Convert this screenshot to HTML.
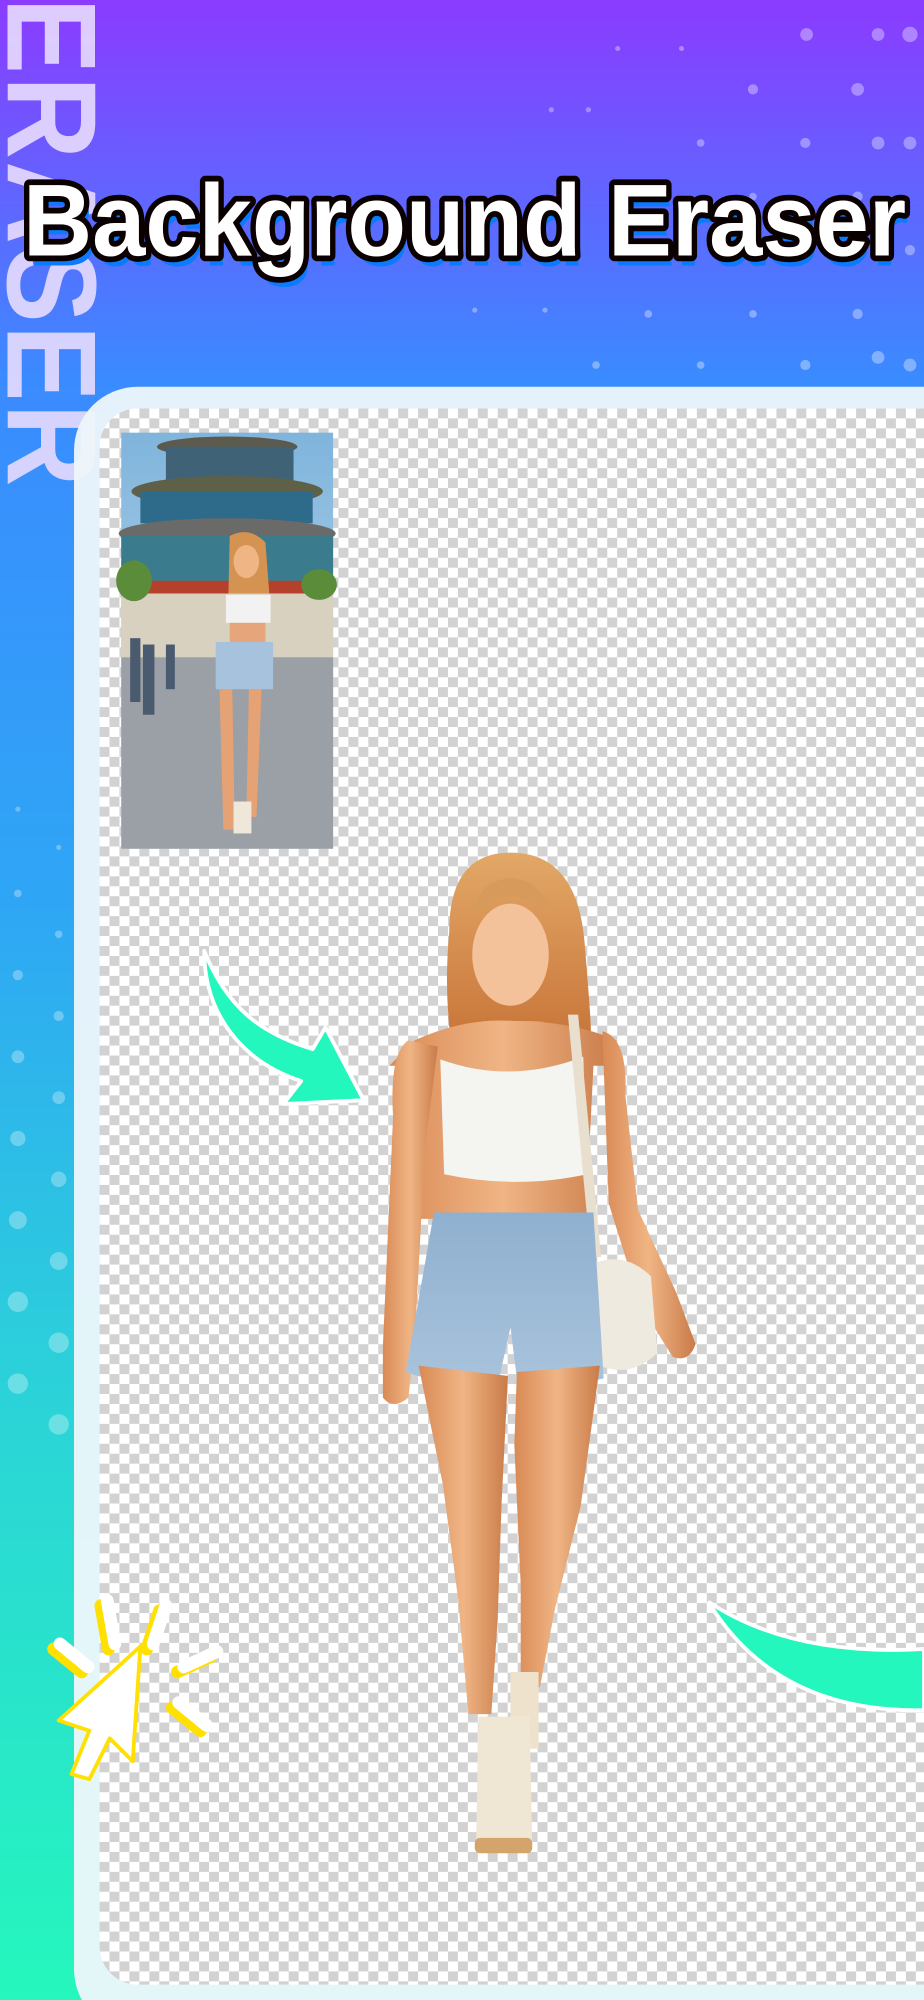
<!DOCTYPE html>
<html><head><meta charset="utf-8">
<style>
html,body{margin:0;padding:0;width:924px;height:2000px;overflow:hidden;}
svg{display:block}
</style></head>
<body>
<svg width="924" height="2000" viewBox="0 0 724 1567" preserveAspectRatio="none" xmlns="http://www.w3.org/2000/svg">
<defs>
<linearGradient id="bg" x1="0" y1="0" x2="0" y2="1">
<stop offset="0" stop-color="#8b3bff"/>
<stop offset="0.19" stop-color="#3a8bff"/>
<stop offset="0.45" stop-color="#2fa6f5"/>
<stop offset="0.7" stop-color="#2bd3d8"/>
<stop offset="1" stop-color="#25f7bd"/>
</linearGradient>
<pattern id="chk" width="15.6" height="15.6" patternUnits="userSpaceOnUse" x="78" y="320">
<rect width="15.6" height="15.6" fill="#fff"/>
<rect width="7.8" height="7.8" fill="#d2d2d2"/>
<rect x="7.8" y="7.8" width="7.8" height="7.8" fill="#d2d2d2"/>
</pattern>
<linearGradient id="sky" x1="0" y1="0" x2="0" y2="1">
<stop offset="0" stop-color="#7fb4dc"/><stop offset="1" stop-color="#cfe3ef"/>
</linearGradient>
<linearGradient id="skin" x1="0" y1="0" x2="1" y2="0">
<stop offset="0" stop-color="#d98a55"/><stop offset="0.5" stop-color="#f0b585"/><stop offset="1" stop-color="#c97b48"/>
</linearGradient>
<linearGradient id="hair" x1="0" y1="0" x2="0" y2="1">
<stop offset="0" stop-color="#e2a867"/><stop offset="1" stop-color="#c9763a"/>
</linearGradient>
<linearGradient id="jeans" x1="0" y1="0" x2="0" y2="1">
<stop offset="0" stop-color="#8fb0cf"/><stop offset="1" stop-color="#a9c3dc"/>
</linearGradient>
</defs>
<rect width="724" height="1567" fill="url(#bg)"/>
<g fill="#fff" opacity="0.35">
<circle cx="632" cy="27" r="5"/><circle cx="713" cy="27" r="6"/>
<circle cx="590" cy="70" r="4"/><circle cx="672" cy="70" r="5"/>
<circle cx="549" cy="112" r="3"/><circle cx="631" cy="112" r="4"/><circle cx="713" cy="112" r="5"/>
<circle cx="590" cy="154" r="3"/><circle cx="672" cy="154" r="4"/>
<circle cx="631" cy="196" r="3"/><circle cx="713" cy="196" r="4"/>
<circle cx="508" cy="246" r="3"/><circle cx="590" cy="246" r="3"/><circle cx="672" cy="246" r="4"/>
<circle cx="467" cy="286" r="3"/><circle cx="549" cy="286" r="3"/><circle cx="631" cy="286" r="4"/><circle cx="713" cy="286" r="5"/>
<circle cx="372" cy="243" r="2"/><circle cx="427" cy="243" r="2"/><circle cx="432" cy="86" r="2"/><circle cx="461" cy="86" r="2"/><circle cx="484" cy="38" r="2"/><circle cx="534" cy="38" r="2"/>
<circle cx="688" cy="27" r="5"/><circle cx="688" cy="112" r="5"/><circle cx="688" cy="196" r="5"/><circle cx="688" cy="280" r="5"/>
</g>
<g fill="#fff" opacity="0.3">
<circle cx="14" cy="634" r="2"/><circle cx="46" cy="664" r="2"/><circle cx="14" cy="700" r="3"/><circle cx="46" cy="732" r="3"/>
<circle cx="14" cy="764" r="4"/><circle cx="46" cy="796" r="4"/><circle cx="14" cy="828" r="5"/><circle cx="46" cy="860" r="5"/>
<circle cx="14" cy="892" r="6"/><circle cx="46" cy="924" r="6"/><circle cx="14" cy="956" r="7"/><circle cx="46" cy="988" r="7"/>
<circle cx="14" cy="1020" r="8"/><circle cx="46" cy="1052" r="8"/><circle cx="14" cy="1084" r="8"/><circle cx="46" cy="1116" r="8"/>
</g>
<text transform="translate(2,0) rotate(90)" x="-2" y="-4" font-family="Liberation Sans, sans-serif" font-weight="bold" font-size="100" fill="#e8dcff" opacity="0.9" letter-spacing="2" textLength="385" lengthAdjust="spacingAndGlyphs">ERASER</text>
<text x="22" y="208" font-family="Liberation Sans, sans-serif" font-weight="bold" font-size="80" fill="#0a7bff" textLength="690" lengthAdjust="spacingAndGlyphs">Background Eraser</text>
<text x="18" y="200" font-family="Liberation Sans, sans-serif" font-weight="bold" font-size="80" fill="#fff" stroke="#0a0000" stroke-width="9" paint-order="stroke" stroke-linejoin="round" textLength="692" lengthAdjust="spacingAndGlyphs">Background Eraser</text>
<rect x="58" y="303" width="720" height="1290" rx="50" fill="#eef7fb" opacity="0.95"/>
<rect x="78" y="320" width="680" height="1235" rx="30" fill="url(#chk)"/>
<g>
<rect x="95" y="339" width="166" height="326" fill="url(#sky)"/>
<ellipse cx="178" cy="350" rx="55" ry="8" fill="#5b5a4d"/>
<rect x="130" y="350" width="100" height="28" fill="#3f6276"/>
<ellipse cx="178" cy="385" rx="75" ry="12" fill="#5e6048"/>
<rect x="110" y="385" width="135" height="25" fill="#2e6b8a"/>
<ellipse cx="178" cy="418" rx="85" ry="12" fill="#6a6a68"/>
<rect x="95" y="420" width="166" height="40" fill="#3a7c8e"/>
<rect x="95" y="455" width="166" height="12" fill="#b5412c"/>
<rect x="95" y="465" width="166" height="50" fill="#d9d1c0"/>
<rect x="95" y="515" width="166" height="150" fill="#9aa0a6"/>
<ellipse cx="105" cy="455" rx="14" ry="16" fill="#5a8c3a"/><ellipse cx="250" cy="458" rx="14" ry="12" fill="#5a8c3a"/>
<g fill="#4a5b70"><rect x="102" y="500" width="8" height="50"/><rect x="112" y="505" width="9" height="55"/><rect x="130" y="505" width="7" height="35"/></g>
<path d="M180 420 q15 -8 28 5 l3 40 -32 0z" fill="#d49350"/>
<ellipse cx="193" cy="440" rx="10" ry="13" fill="#f0b585"/>
<rect x="177" y="466" width="35" height="22" fill="#f2f2f2"/>
<rect x="180" y="488" width="28" height="15" fill="#e6a57a"/>
<rect x="169" y="503" width="45" height="37" fill="#a6c2dd"/>
<path d="M172 540 l10 0 2 110 -9 0z M195 540 l10 0 -4 100 -8 0z" fill="#e5a275"/>
<rect x="183" y="628" width="14" height="25" fill="#efe8da"/>
</g>
<g>
<path d="M352 730 q0 -62 48 -62 q52 0 58 70 q5 60 5 70 l-110 5 q-5 -40 -1 -83z" fill="url(#hair)"/>
<path d="M378 800 l48 0 6 22 -58 0z" fill="url(#skin)"/>
<ellipse cx="400" cy="748" rx="30" ry="40" fill="#f3c19a"/>
<path d="M370 720 q30 -35 62 0 q-5 -30 -32 -32 q-27 2 -30 32z" fill="#d89a5a"/>
<path d="M325 815 q40 -18 78 -15 q45 0 80 15 l0 20 -18 0 -5 100 5 20 -140 0 5 -30 -5 -90 -20 0z" fill="url(#skin)"/>
<path d="M345 830 q55 20 112 -2 l3 92 q-55 12 -112 0z" fill="#f4f4f1"/>
<path d="M320 815 q-15 10 -12 60 l-8 180 l0 40 q8 10 20 0 l5 -45 8 -150 10 -80z" fill="url(#skin)"/>
<path d="M472 808 q20 5 18 50 l10 90 l30 65 l15 40 q-5 15 -18 10 l-25 -40 -25 -80z" fill="url(#skin)"/>
<path d="M445 795 l8 0 18 190 -8 0z" fill="#e8dfcf"/>
<path d="M465 990 q25 -10 45 10 l5 60 q-20 20 -45 10z" fill="#efeae0"/>
<path d="M340 950 l125 0 8 130 q-40 10 -68 0 l-5 -40 -10 45 q-45 0 -72 -10z" fill="url(#jeans)"/>
<path d="M328 1070 l70 8 -5 100 -3 90 -5 75 -18 0 -8 -90 -12 -90z" fill="url(#skin)"/>
<path d="M405 1075 l65 -5 -15 110 -20 80 -12 62 -15 0 0 -80 -5 -110z" fill="url(#skin)"/>
<path d="M400 1310 l22 0 0 60 -22 0z" fill="#eee2cc"/>
<path d="M375 1345 l40 0 2 100 q-20 12 -44 2z" fill="#efe6d4"/>
<rect x="372" y="1440" width="45" height="12" rx="4" fill="#d4a56a"/>
</g>
<!-- green arrow -->
<path d="M160 745 C178 790 205 810 245 822 L255 805 L285 862 L222 865 L236 847 C190 832 160 795 160 745 Z" fill="#23f7bd" stroke="#fff" stroke-width="3" stroke-linejoin="round"/>
<!-- right green arc -->
<path d="M555 1255 Q620 1298 724 1292 L724 1340 Q608 1342 555 1255 Z" fill="#23f7bd" stroke="#fff" stroke-width="3"/>
<!-- cursor icon -->
<g stroke-linecap="round" stroke-width="10" fill="none">
<path d="M79 1258 l6 34 M125 1262 l-10 30 M42 1292 l22 18 M165 1298 l-26 12 M135 1338 l22 18" stroke="#ffe000"/>
<path d="M84 1254 l6 34 M130 1258 l-10 30 M47 1288 l22 18 M170 1294 l-26 12 M140 1334 l22 18" stroke="#fff"/>
</g>
<path d="M110 1290 l-64 58 l24 8 l-14 34 l14 4 l16 -32 l18 18z" fill="#fff" stroke="#ffe000" stroke-width="3" stroke-linejoin="round"/>
</svg>
</body></html>
